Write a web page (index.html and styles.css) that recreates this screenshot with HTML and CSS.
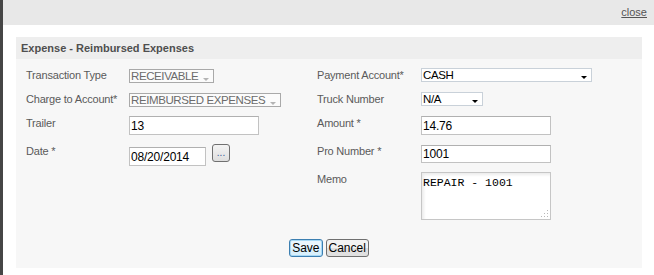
FILE: index.html
```html
<!DOCTYPE html>
<html lang="en">

<head>
	<meta charset="UTF-8">
	<title>Expense - Reimbursed Expenses</title>
	<link rel="stylesheet" href="styles.css">
</head>

<body>
	<div class="window">
		<div class="topbar">
			<a href="#" class="close-link">close</a>
		</div>

		<div class="panel">
			<div class="panel-title">Expense - Reimbursed Expenses</div>
			<div class="panel-body">
				<div class="form-grid">
					<!-- row 1 -->
					<label class="field-label">Transaction Type</label>
					<div class="field">
						<span class="select-wrap disabled sel-type">
							<select disabled><option>RECEIVABLE</option></select>
						</span>
					</div>
					<label class="field-label">Payment Account*</label>
					<div class="field">
						<span class="select-wrap sel-payment">
							<select><option>CASH</option></select>
						</span>
					</div>

					<!-- row 2 -->
					<label class="field-label">Charge to Account*</label>
					<div class="field">
						<span class="select-wrap disabled sel-charge">
							<select disabled><option>REIMBURSED EXPENSES</option></select>
						</span>
					</div>
					<label class="field-label">Truck Number</label>
					<div class="field">
						<span class="select-wrap sel-truck">
							<select><option>N/A</option></select>
						</span>
					</div>

					<!-- row 3 -->
					<label class="field-label">Trailer</label>
					<div class="field">
						<input type="text" class="text-input w-wide" value="13">
					</div>
					<label class="field-label">Amount *</label>
					<div class="field">
						<input type="text" class="text-input w-wide" value="14.76">
					</div>

					<!-- row 4 -->
					<label class="field-label">Date *</label>
					<div class="field date-field">
						<input type="text" class="text-input w-date" value="08/20/2014">
						<button class="picker-btn">...</button>
					</div>
					<label class="field-label">Pro Number *</label>
					<div class="field">
						<input type="text" class="text-input w-wide pro-input" value="1001">
					</div>

					<!-- row 5 -->
					<div></div>
					<div></div>
					<label class="field-label">Memo</label>
					<div class="field">
						<span class="memo-wrap">
							<textarea class="memo">REPAIR - 1001</textarea>
						</span>
					</div>
				</div>

				<div class="actions">
					<button class="btn btn-focused">Save</button>
					<button class="btn">Cancel</button>
				</div>
			</div>
		</div>
	</div>
</body>

</html>
```

FILE: styles.css
```css
html,
body {
	margin: 0;
	padding: 0;
	background: #fff;
}

body {
	font-family: "Liberation Sans", Arial, sans-serif;
	font-size: 11px;
	color: #555;
}

.window {
	height: 275px;
	box-sizing: border-box;
	border-left: 3px solid #464646;
	overflow: hidden;
}

.topbar {
	height: 25px;
	line-height: 25px;
	background: #e8e8e8;
	text-align: right;
	padding-right: 7px;
}

.close-link {
	color: #555;
	font-size: 11px;
	text-decoration: underline;
}

.panel {
	margin: 12px 12px 0 13px;
}

.panel-title {
	height: 22px;
	line-height: 22px;
	padding-left: 5px;
	background: #eeeeee;
	font-weight: bold;
	font-size: 11px;
	color: #4f4f4f;
}

.panel-body {
	background: #f7f7f7;
	padding: 9px 0 11px 10px;
}

.form-grid {
	display: grid;
	grid-template-columns: 103px 188px 104px 1fr;
	grid-template-rows: 24px 24px 28px 28px auto;
	align-items: start;
}

.field-label {
	line-height: 14px;
	color: #5a5a5a;
	letter-spacing: -0.2px;
	white-space: nowrap;
}

.field {
	display: flex;
	align-items: flex-start;
}

/* selects */
.select-wrap {
	position: relative;
	display: inline-block;
	height: 14px;
}

.select-wrap select {
	appearance: none;
	-webkit-appearance: none;
	box-sizing: border-box;
	width: 100%;
	height: 14px;
	margin: 0;
	padding: 0 12px 0 1px;
	border: 1px solid #c9d1d9;
	border-radius: 0;
	background: #fff;
	font-family: "Liberation Sans", Arial, sans-serif;
	font-size: 11.5px;
	letter-spacing: -0.4px;
	line-height: 12px;
	color: #000;
	outline: none;
}

.select-wrap::after {
	content: "";
	position: absolute;
	right: 5px;
	bottom: 3px;
	border-left: 3px solid transparent;
	border-right: 3px solid transparent;
	border-top: 3px solid #000;
}

.select-wrap.disabled select {
	border-color: #a9a9a9;
	background: #fbfbfb;
	color: #6b6b6b;
	opacity: 1;
}

.select-wrap.disabled::after {
	border-top-color: #b4b4b4;
	bottom: 2px;
}

.sel-type {
	width: 85px;
	margin-top: 1px;
}

.sel-charge {
	width: 152px;
	margin-top: 1px;
}

.sel-payment {
	width: 171px;
}

.sel-truck {
	width: 62px;
}

/* text inputs */
.text-input {
	box-sizing: border-box;
	height: 19px;
	margin: 0;
	padding: 0 1px;
	border: 1px solid #c2c2c2;
	border-top-color: #b0b0b0;
	background: #fff;
	font-family: "Liberation Sans", Arial, sans-serif;
	font-size: 12px;
	letter-spacing: -0.2px;
	color: #000;
	outline: none;
}

.w-wide {
	width: 130px;
}

.w-date {
	width: 77px;
	margin-top: 3px;
}

.pro-input {
	margin-top: 1px;
	height: 18px;
}

.picker-btn {
	box-sizing: border-box;
	width: 18px;
	height: 18px;
	margin: 0 0 0 6px;
	padding: 0;
	border: 1px solid #707070;
	border-radius: 3px;
	background: linear-gradient(#f4f4f4, #dedede);
	font-family: "Liberation Sans", Arial, sans-serif;
	font-size: 10px;
	line-height: 14px;
	color: #3a5a9a;
}

/* memo */
.memo-wrap {
	position: relative;
	display: inline-block;
	width: 130px;
	height: 48px;
}

.memo {
	box-sizing: border-box;
	width: 130px;
	height: 48px;
	margin: 0;
	padding: 4px 1px;
	border: 1px solid #c6c6c6;
	background: #fff;
	box-shadow: inset 2px 2px 3px rgba(0, 0, 0, 0.08);
	font-family: "Liberation Mono", "Courier New", monospace;
	font-size: 11.5px;
	line-height: 12px;
	color: #000;
	resize: none;
	outline: none;
}

.memo-wrap::after {
	content: "";
	position: absolute;
	right: 3px;
	bottom: 3px;
	width: 8px;
	height: 8px;
	background:
		radial-gradient(circle, #b8b8b8 0.8px, transparent 1px) 6px 0 / 3px 3px no-repeat,
		radial-gradient(circle, #b8b8b8 0.8px, transparent 1px) 3px 3px / 3px 3px no-repeat,
		radial-gradient(circle, #b8b8b8 0.8px, transparent 1px) 6px 3px / 3px 3px no-repeat,
		radial-gradient(circle, #b8b8b8 0.8px, transparent 1px) 0 6px / 3px 3px no-repeat,
		radial-gradient(circle, #b8b8b8 0.8px, transparent 1px) 3px 6px / 3px 3px no-repeat,
		radial-gradient(circle, #b8b8b8 0.8px, transparent 1px) 6px 6px / 3px 3px no-repeat;
}

/* buttons */
.actions {
	display: flex;
	justify-content: center;
	gap: 3px;
	margin-top: 19px;
	padding-right: 10px;
}

.btn {
	box-sizing: border-box;
	height: 18px;
	margin: 0;
	padding: 0 2px;
	border: 1px solid #707070;
	border-radius: 3px;
	background: linear-gradient(#f2f2f2 50%, #e0e0e0 50%);
	font-family: "Liberation Sans", Arial, sans-serif;
	font-size: 12px;
	line-height: 14px;
	color: #000;
}

.btn-focused {
	border-color: #3c7fb1;
	box-shadow: inset 0 0 0 1px #a7d8f5;
	background: linear-gradient(#eaf6fd 50%, #d9f0fc 50%);
}
```
